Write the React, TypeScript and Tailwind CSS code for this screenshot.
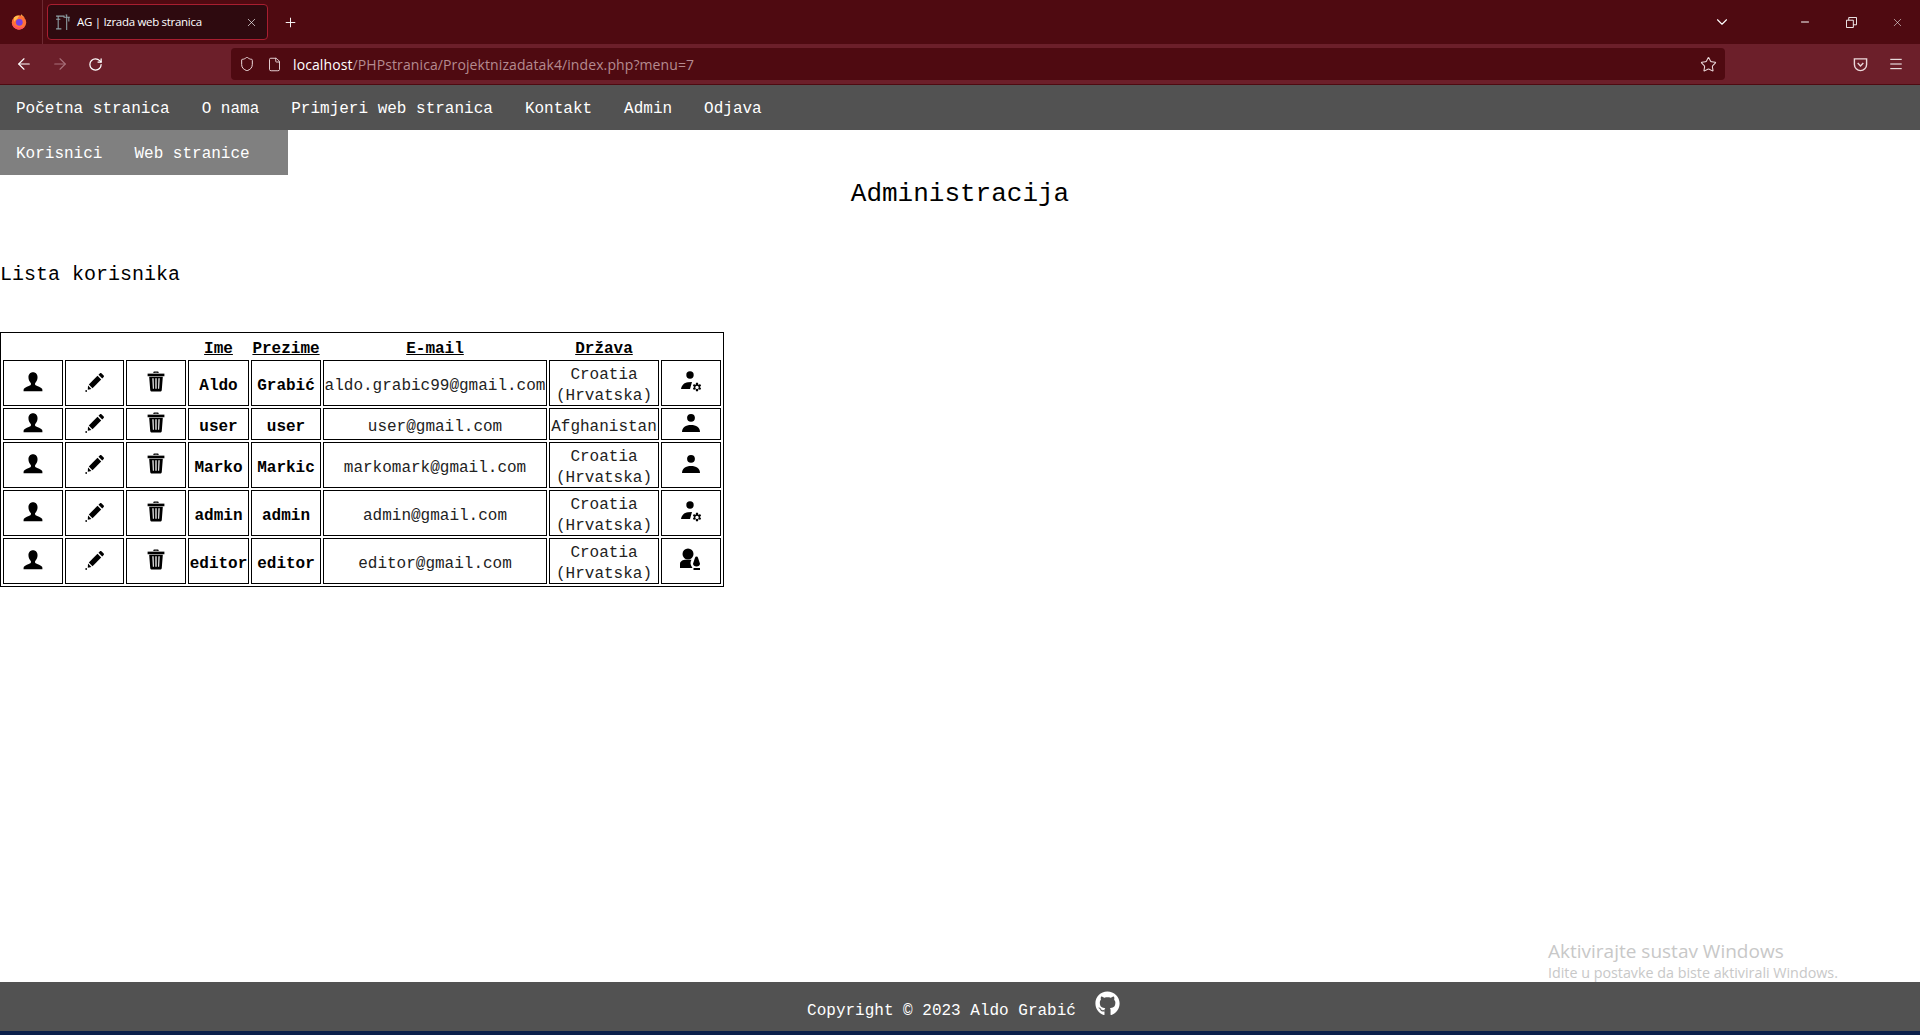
import { FaGithub } from "react-icons/fa";
import { ArrowLeft, ArrowRight, ChevronDown, File, Menu, Minus, Plus, RotateCw, Shield, Star, X } from "lucide-react";

const mono = "font-['Liberation_Mono',monospace]";

type Role = "admin" | "user" | "editor";

const users: { ime: string; prezime: string; email: string; drzava: string[]; role: Role; tall: boolean }[] = [
  { ime: "Aldo", prezime: "Grabić", email: "aldo.grabic99@gmail.com", drzava: ["Croatia", "(Hrvatska)"], role: "admin", tall: true },
  { ime: "user", prezime: "user", email: "user@gmail.com", drzava: ["Afghanistan"], role: "user", tall: false },
  { ime: "Marko", prezime: "Markic", email: "markomark@gmail.com", drzava: ["Croatia", "(Hrvatska)"], role: "user", tall: true },
  { ime: "admin", prezime: "admin", email: "admin@gmail.com", drzava: ["Croatia", "(Hrvatska)"], role: "admin", tall: true },
  { ime: "editor", prezime: "editor", email: "editor@gmail.com", drzava: ["Croatia", "(Hrvatska)"], role: "editor", tall: true },
];

function FirefoxLogo() {
  return (
    <svg viewBox="0 0 16 16" className="h-[16px] w-[16px]">
      <path fill="#ffbd4f" d="M10.500 0c.4 1.500 1.800 2.200 3 3.500L9 5z" />
      <circle cx="8" cy="8.500" r="7.200" fill="#ff7139" />
      <path fill="#ff4f5e" d="M1 9.500c.5 3.500 3.500 6 7 6 2.500 0 4.500-1.200 5.800-3-3 1.500-9 1.500-12.800-3z" />
      <circle cx="8.300" cy="8.300" r="3.400" fill="#7542e5" />
      <path fill="#ffbd4f" d="M3 3.500c1.500-1.500 3.500-2 5.500-1.500C7 3 6.500 4 6.500 5c-1.500.5-2.500 1.500-3 3C3 6.500 2.700 5 3 3.500z" />
    </svg>
  );
}

function PersonIcon() {
  return (
    <svg viewBox="1.2 0.8 17.6 17.6" className="h-5 w-5 fill-black">
      <path d="M10 1c2.600 0 4 2 4 4.400 0 2-.9 3.900-2 5-.4.400-.3 1.600.3 2 1.600.8 4.700 1.600 5.700 3.100.3.500.3 1.500.3 2.300H1.700c0-.8 0-1.800.3-2.300 1-1.500 4.100-2.300 5.700-3.100.6-.4.7-1.600.3-2-1.100-1.100-2-3-2-5C6 3 7.400 1 10 1z" />
    </svg>
  );
}

function PencilIcon() {
  return (
    <svg viewBox="0 0 20 20" className="h-5 w-5 fill-black">
      <path d="M13.500 2.800 15 1.300c.4-.4 1-.4 1.400 0l2.300 2.300c.4.400.4 1 0 1.400l-1.500 1.500z" />
      <path d="M12.500 3.800 16.200 7.500 7.500 16.200 3.800 12.500z" />
      <path d="M3 13.600 6.400 17 2.800 17.700z" />
      <rect x="0.400" y="18.200" width="1.600" height="1.600" />
    </svg>
  );
}

function TrashIcon() {
  return (
    <svg viewBox="1 0 18 20" className="h-[21px] w-5 fill-black">
      <path d="M7.500 1.500c0-.6.400-1 1-1h3c.6 0 1 .4 1 1V2h-1.200v-.4H8.700V2H7.500z" />
      <path d="M2 2.500h16V5H2z" />
      <path fillRule="evenodd" d="M3.500 5.500h13l-1 12.500c-.1 1-.8 1.500-1.600 1.500H6.100c-.8 0-1.500-.5-1.600-1.500zM6.500 7l.5 10h1L7.700 7zM9.400 7v10h1.200V7zM12.300 7 12 17h1l.5-10z" />
    </svg>
  );
}

function RoleIcon({ role }: { role: Role }) {
  if (role === "user") {
    return (
      <svg viewBox="0 0 20 20" className="h-5 w-5 fill-black">
        <circle cx="10" cy="4.800" r="3.900" />
        <path d="M1 19c0-4.500 3.800-7 9-7s9 2.500 9 7z" />
      </svg>
    );
  }
  if (role === "admin") {
    return (
      <svg viewBox="0 0 24 22" className="h-[22px] w-[24px] fill-black">
        <circle cx="11" cy="4" r="3.700" />
        <path d="M2 18c.5-3.500 3-6.500 7-6.800l4-.2-2 7z" />
        <path
          transform="translate(2.200 3.700)"
          fillRule="evenodd"
          d="M14.800 8h2l.4 2.200 1.700-.8 1 1.700-1.400 1.200 1.400 1.200-1 1.700-1.700-.8-.4 2.200h-2l-.4-2.200-1.700.8-1-1.700 1.400-1.200-1.400-1.200 1-1.700 1.700.8zM15.800 11a1.700 1.700 0 1 0 0 3.400 1.700 1.700 0 0 0 0-3.400z"
        />
      </svg>
    );
  }
  return (
    <svg viewBox="0 0 24 24" className="h-[24px] w-[24px] fill-black">
      <circle cx="9" cy="6" r="5.500" />
      <path d="M1 20v-4c0-2.800 3-4.200 6-4.200h5.500c-.5 1-1 2-1 3.200 0 1.800 1 3.500 2 5z" />
      <path d="M17.500 8.500c-.8 0-1.300.4-1.500 1.200l-2 6c0 1.600 1.500 2.800 3.500 2.800s3.500-1.200 3.500-2.800l-2-6c-.2-.8-.7-1.200-1.500-1.200z" />
      <rect x="14.500" y="20" width="6.500" height="2" />
    </svg>
  );
}

export default function App() {
  return (
    <div className={`relative flex min-h-[1035px] flex-col bg-white ${mono}`}>
      {/* browser chrome */}
      <div className="flex h-[44px] items-center bg-[#4f0a11] font-['Open_Sans',sans-serif]">
        <div className="flex h-[44px] w-[43px] items-center justify-center border-r border-[#6e2a32] pr-[4px]">
          <FirefoxLogo />
        </div>
        <div className="ml-[4px] flex h-[36px] w-[221px] items-center rounded-[4px] border border-[#a81e30] bg-[#2e0a0f] pl-[7px] pr-[9px] text-white">
          <svg viewBox="0 0 16 16" className="h-[17px] w-[17px] fill-none stroke-[#8fa3a8]">
            <path d="M1 2h8M3 2v12M1 14h5M1 5h4M10 1h1v14M8 3h6M13 3v4" />
          </svg>
          <span className="ml-[5px] text-[11.500px] leading-none tracking-[-0.3px]">AG | Izrada web stranica</span>
          <X className="ml-auto h-[13px] w-[13px] text-white" strokeWidth={1.200} />
        </div>
        <Plus className="ml-[15px] h-[15px] w-[15px] text-white" strokeWidth={1.500} />
        <div className="ml-auto flex items-center">
          <ChevronDown className="h-[18px] w-[18px] text-white" strokeWidth={1.500} />
          <div className="ml-[51px] flex items-center">
            <div className="flex w-[46px] justify-center">
              <Minus className="h-[12px] w-[12px] text-white" strokeWidth={2} />
            </div>
            <div className="flex w-[46px] justify-center">
              <svg viewBox="0 0 12 12" className="h-[11px] w-[11px] fill-none stroke-white">
                <path d="M.5 3.500h7.500v8H.5zM3 3.500V.5h8.500v8H8" />
              </svg>
            </div>
            <div className="flex w-[46px] justify-center">
              <X className="h-[13px] w-[13px] text-white" strokeWidth={1} />
            </div>
          </div>
        </div>
      </div>
      <div className="flex h-[41px] items-center border-b border-[#4f0a11] bg-[#6c1f2a] font-['Open_Sans',sans-serif]">
        <ArrowLeft className="ml-[15px] h-[18px] w-[18px] text-white" strokeWidth={1.500} />
        <ArrowRight className="ml-[18px] h-[18px] w-[18px] text-[#a8707a]" strokeWidth={1.500} />
        <RotateCw className="ml-[19px] h-[15px] w-[15px] text-white" strokeWidth={2} />
        <div className="ml-[128px] flex h-[32px] w-[1494px] items-center rounded-[4px] bg-[#4f0a11] pl-[8px] pr-[8px]">
          <Shield className="h-[16px] w-[16px] text-[#ecd9db]" strokeWidth={1.500} />
          <File className="ml-[12px] h-[15px] w-[15px] text-[#ecd9db]" strokeWidth={1.500} />
          <span className="ml-[11px] text-[14px] tracking-[0.1px] text-[#b58a90]">
            <span className="text-white">localhost</span>/PHPstranica/Projektnizadatak4/index.php?menu=7
          </span>
          <Star className="ml-auto h-[17px] w-[17px] text-[#ecd9db]" strokeWidth={1.500} />
        </div>
        <svg viewBox="0 0 16 16" className="ml-[128px] h-[15px] w-[15px] fill-none stroke-[#ecd9db] stroke-[1.500]">
          <path d="M1.500 2h13v6a6.500 6.500 0 0 1-13 0zM5 6.500l3 3 3-3" />
        </svg>
        <Menu className="ml-[20px] h-[16px] w-[16px] text-white" strokeWidth={1.500} />
      </div>

      {/* site nav */}
      <nav className="flex h-[45px] items-center bg-[#525252] pl-[16px] pt-[3px] text-[16px] text-white">
        <a className="mr-[32px]">Početna stranica</a>
        <a className="mr-[32px]">O nama</a>
        <a className="mr-[32px]">Primjeri web stranica</a>
        <a className="mr-[32px]">Kontakt</a>
        <a className="mr-[32px]">Admin</a>
        <a>Odjava</a>
      </nav>
      <nav className="flex h-[45px] w-[288px] items-center bg-[#808080] pl-[16px] pt-[3px] text-[16px] text-white">
        <a className="mr-[32px]">Korisnici</a>
        <a>Web stranice</a>
      </nav>

      <main className="flex-1 text-black">
        <h1 className="mt-[2px] text-center text-[26px] leading-[34px]">Administracija</h1>
        <h2 className="mt-[50px] text-[20px] leading-[27px]">Lista korisnika</h2>
        <table className="mt-[44px] w-[724px] table-fixed border-separate border-spacing-[2px] border border-black text-center text-[16px] leading-[21px]">
          <colgroup>
            <col className="w-[60px]" />
            <col className="w-[59px]" />
            <col className="w-[60px]" />
            <col className="w-[61px]" />
            <col className="w-[70px]" />
            <col className="w-[224px]" />
            <col className="w-[110px]" />
            <col className="w-[60px]" />
          </colgroup>
          <thead>
            <tr className="h-[23px] font-bold underline">
              <th></th>
              <th></th>
              <th></th>
              <th><div className="translate-y-[3px]">Ime</div></th>
              <th><div className="translate-y-[3px]">Prezime</div></th>
              <th><div className="translate-y-[3px]">E-mail</div></th>
              <th><div className="translate-y-[3px]">Država</div></th>
              <th></th>
            </tr>
          </thead>
          <tbody>
            {users.map((u) => (
              <tr key={u.email} className={u.tall ? "h-[46px]" : "h-[32px]"}>
                <td className="border border-black p-0"><div className="flex justify-center pb-[3px]"><PersonIcon /></div></td>
                <td className="border border-black p-0"><div className="flex justify-center pb-[3px]"><PencilIcon /></div></td>
                <td className="border border-black p-0"><div className="flex justify-center pb-[3px]"><TrashIcon /></div></td>
                <td className="border border-black p-0 font-bold"><div className="translate-y-[3px]">{u.ime}</div></td>
                <td className="border border-black p-0 font-bold"><div className="translate-y-[3px]">{u.prezime}</div></td>
                <td className="border border-black p-0 whitespace-nowrap text-[#222]"><div className="translate-y-[3px]">{u.email}</div></td>
                <td className="border border-black p-0 text-[#222]">
                  <div className="translate-y-[3px]">
                    {u.drzava.map((line) => (
                      <div key={line}>{line}</div>
                    ))}
                  </div>
                </td>
                <td className="border border-black p-0"><div className="flex justify-center pb-[2px]"><RoleIcon role={u.role} /></div></td>
              </tr>
            ))}
          </tbody>
        </table>
      </main>

      <footer className="flex h-[49px] items-center justify-center bg-[#525252] pl-[7px] text-[16px] text-white">
        <span className="mt-[8px]">Copyright © 2023 Aldo Grabić</span>
        <span className="mb-[6px] ml-[19px]"><FaGithub className="h-[25px] w-[25px] text-white" /></span>
      </footer>
      <div className="h-[4px] bg-[#0b1f4a]" />

      {/* windows watermark */}
      <div className="pointer-events-none absolute bottom-[53px] left-[1548px] font-['Open_Sans',sans-serif] text-[#c8c8c8]">
        <div className="text-[19px] leading-[26px]">Aktivirajte sustav Windows</div>
        <div className="text-[14.300px] leading-[18px]">Idite u postavke da biste aktivirali Windows.</div>
      </div>
    </div>
  );
}
